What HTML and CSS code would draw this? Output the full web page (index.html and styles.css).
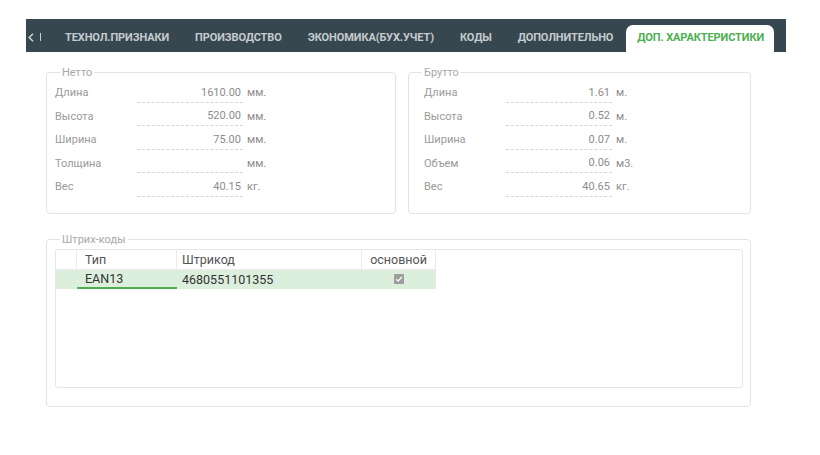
FILE: index.html
```html
<!DOCTYPE html>
<html lang="ru">
<head>
<meta charset="utf-8">
<link rel="stylesheet" href="styles.css">
</head>
<body>
<nav class="tabbar">
  <span class="nav-arrow"><svg width="6" height="9" viewBox="0 0 6 9"><path d="M5 0.8 L1.2 4.5 L5 8.2" fill="none" stroke="#c9cfd2" stroke-width="1.6"/></svg></span><span class="nav-sep"></span>
  <span class="tab first">ТЕХНОЛ.ПРИЗНАКИ</span>
  <span class="tab">ПРОИЗВОДСТВО</span>
  <span class="tab">ЭКОНОМИКА(БУХ.УЧЕТ)</span>
  <span class="tab">КОДЫ</span>
  <span class="tab">ДОПОЛНИТЕЛЬНО</span>
  <span class="tab active">ДОП. ХАРАКТЕРИСТИКИ</span>
</nav>

<main class="content">
  <div class="dims">
    <fieldset class="group netto">
      <legend>Нетто</legend>
      <div class="row"><span class="lbl">Длина</span><span class="val">1610.00</span><span class="unit">мм.</span></div>
      <div class="row"><span class="lbl">Высота</span><span class="val">520.00</span><span class="unit">мм.</span></div>
      <div class="row"><span class="lbl">Ширина</span><span class="val">75.00</span><span class="unit">мм.</span></div>
      <div class="row"><span class="lbl">Толщина</span><span class="val"></span><span class="unit">мм.</span></div>
      <div class="row"><span class="lbl">Вес</span><span class="val">40.15</span><span class="unit">кг.</span></div>
    </fieldset>
    <fieldset class="group brutto">
      <legend>Брутто</legend>
      <div class="row"><span class="lbl">Длина</span><span class="val">1.61</span><span class="unit">м.</span></div>
      <div class="row"><span class="lbl">Высота</span><span class="val">0.52</span><span class="unit">м.</span></div>
      <div class="row"><span class="lbl">Ширина</span><span class="val">0.07</span><span class="unit">м.</span></div>
      <div class="row"><span class="lbl">Объем</span><span class="val">0.06</span><span class="unit">м3.</span></div>
      <div class="row"><span class="lbl">Вес</span><span class="val">40.65</span><span class="unit">кг.</span></div>
    </fieldset>
  </div>

  <fieldset class="group barcodes">
    <legend>Штрих-коды</legend>
    <div class="grid">
      <div class="grow head">
        <span class="c0"></span>
        <span class="c1">Тип</span>
        <span class="c2">Штрикод</span>
        <span class="c3">основной</span>
      </div>
      <div class="grow data">
        <span class="c0"></span>
        <span class="c1 editing">EAN13</span>
        <span class="c2">4680551101355</span>
        <span class="c3"><span class="chk"><svg width="8" height="8" viewBox="0 0 8 8"><path d="M1.2 4.2 L3.2 6 L6.8 1.8" fill="none" stroke="#fff" stroke-width="1.3"/></svg></span></span>
      </div>
    </div>
  </fieldset>
</main>
</body>
</html>
```

FILE: styles.css
```css
html, body {
  margin: 0;
  padding: 0;
  background: #ffffff;
  font-family: Roboto, "Noto Sans", "Liberation Sans", sans-serif;
}

.tabbar {
  margin: 19px 0 0 26px;
  width: 760px;
  height: 33px;
  background: #37474f;
  display: flex;
  align-items: flex-end;
  box-sizing: border-box;
}

.nav-arrow {
  height: 27px;
  display: flex;
  align-items: center;
  padding-bottom: 3px;
  box-sizing: border-box;
  margin-left: 2px;
}
.nav-sep {
  align-self: flex-end;
  width: 1px;
  height: 8px;
  margin: 0 0 11px 6px;
  background: #c9cfd2;
}

.tab {
  height: 27px;
  display: flex;
  align-items: center;
  padding: 0 13px 3px;
  box-sizing: border-box;
  color: #c5cbce;
  font-size: 11px;
  font-weight: bold;
  letter-spacing: -0.1px;
  white-space: nowrap;
}
.tab.first { margin-left: 11px; }

.tab.active {
  margin-left: 0;
  background: #ffffff;
  color: #4caf50;
  border-radius: 7px 7px 0 0;
  padding: 0 10px 2px 11px;
}

.content {
  margin: 14px 0 0 46px;
  width: 705px;
}

.dims {
  display: grid;
  grid-template-columns: 350px 343px;
  column-gap: 12px;
}

.group {
  margin: 0;
  border: 1px solid #e3e3e3;
  border-radius: 4px;
  min-width: 0;
  padding-left: 0;
}
.group legend {
  padding: 0 2px;
  margin-left: 13px;
  font-size: 11px;
  line-height: 13px;
  color: #a8a8a8;
}

.netto { padding: 2px 8px 14px 0; }
.brutto { padding: 2px 8px 14px 0; }
.netto .row { padding-left: 8px; }
.brutto .row { padding-left: 15px; }

.row {
  height: 23.5px;
  display: flex;
  align-items: center;
  font-size: 11px;
  color: #9a9a9a;
}
.lbl { width: 82px; }
.val {
  width: 106px;
  height: 20px;
  line-height: 19px;
  box-sizing: border-box;
  text-align: right;
  padding-right: 2px;
  border-bottom: 1px dashed #d6d6d6;
  color: #8c8c8c;
}
.unit { margin-left: 4px; color: #8c8c8c; }

.barcodes {
  margin-top: 19px;
  padding: 3px 7px 18px 0;
}

.grid {
  margin-left: 8px;
  height: 139px;
  border: 1px solid #e6e6e6;
  border-radius: 3px;
  box-sizing: border-box;
}

.grow {
  display: flex;
  height: 19px;
  font-size: 12.5px;
  width: 380px;
}
.grow span.c0, .grow span.c1, .grow span.c2, .grow span.c3 {
  display: flex;
  align-items: center;
  box-sizing: border-box;
}
.c0 { width: 21px; }
.c1 { width: 100px; padding-left: 8px; }
.c2 { width: 185px; padding-left: 5px; }
.c3 { width: 74px; justify-content: center; }

.head { color: #555555; border-bottom: 1px solid #ececec; }
.head .c0, .head .c1, .head .c2, .head .c3 { border-right: 1px solid #ececec; }

.data { background: #dcefdc; color: #333333; }
.data .editing { border-bottom: 2px solid #4caf50; }

.chk {
  width: 10px;
  height: 10px;
  background: #9e9e9e;
  border-radius: 1px;
  display: flex;
  align-items: center;
  justify-content: center;
}
```
